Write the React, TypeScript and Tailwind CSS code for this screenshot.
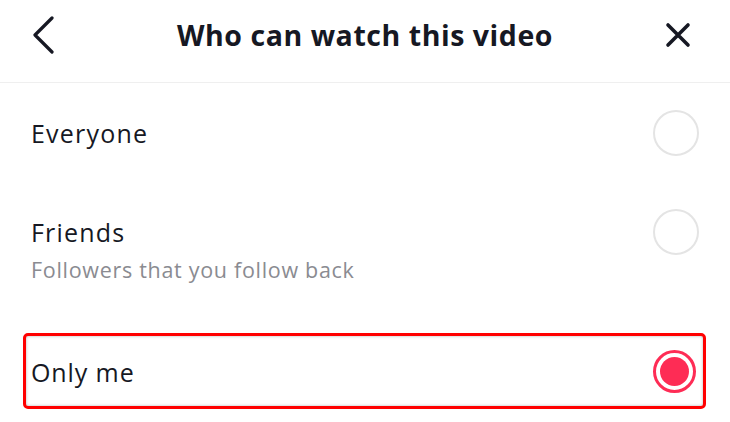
import React from "react";

function Radio({ selected }: { selected?: boolean }) {
  if (selected) {
    return (
      <div className="w-[43px] h-[43px] rounded-full border-[3px] border-[#fe2c55] flex items-center justify-center bg-white shrink-0">
        <div className="w-[29px] h-[29px] rounded-full bg-[#fe2c55]" />
      </div>
    );
  }
  return <div className="w-[46px] h-[46px] rounded-full border-[2.5px] border-[#e4e4e4] bg-white shrink-0" />;
}

export default function App() {
  return (
    <div
      className="w-[730px] h-[422px] bg-white overflow-hidden text-[#161823]"
      style={{ fontFamily: '"Open Sans", "Liberation Sans", sans-serif' }}
    >
      {/* Header */}
      <div className="h-[83px] border-b-[1.5px] border-[#efefef]">
        <div className="h-[70px] flex items-center">
          <div className="w-[100px] pl-[32px] flex items-center">
            <svg width="24" height="38" viewBox="0 0 24 38" fill="none">
              <path d="M20 2 L3 19 L20 36" stroke="#161823" strokeWidth="3.2" strokeLinecap="round" strokeLinejoin="round" />
            </svg>
          </div>
          <div className="flex-1 text-center text-[28.5px] font-bold tracking-[0.55px] leading-none">Who can watch this video</div>
          <div className="w-[100px] pl-[35px] flex items-center">
            <svg width="26" height="26" viewBox="0 0 26 26" fill="none">
              <path d="M3 3 L23 23 M23 3 L3 23" stroke="#161823" strokeWidth="3.6" strokeLinecap="round" />
            </svg>
          </div>
        </div>
      </div>

      {/* Everyone */}
      <div className="h-[100px] flex items-center justify-between pl-[31px] pr-[31px]">
        <div className="text-[25px] leading-none tracking-[1.2px]">Everyone</div>
        <Radio />
      </div>

      {/* Friends */}
      <div className="h-[150px] flex items-start justify-between pl-[31px] pr-[31px]">
        <div className="flex flex-col pt-[33px]">
          <div className="text-[25px] leading-[32px] tracking-[1.2px]">Friends</div>
          <div className="text-[21.5px] leading-[28px] mt-[8px] text-[#8a8b91] tracking-[0.7px]">Followers that you follow back</div>
        </div>
        <div className="mt-[26px]">
          <Radio />
        </div>
      </div>

      {/* Only me */}
      <div className="ml-[23px] w-[683px] h-[76px] border-[3px] border-[#ff0000] rounded-[5px] flex items-center justify-between pl-[5px] pr-[7px] shadow-[inset_0_0_3px_rgba(0,0,0,0.3)]">
        <div className="text-[25px] leading-none tracking-[0.9px] mt-[2px]">Only me</div>
        <Radio selected />
      </div>
    </div>
  );
}
